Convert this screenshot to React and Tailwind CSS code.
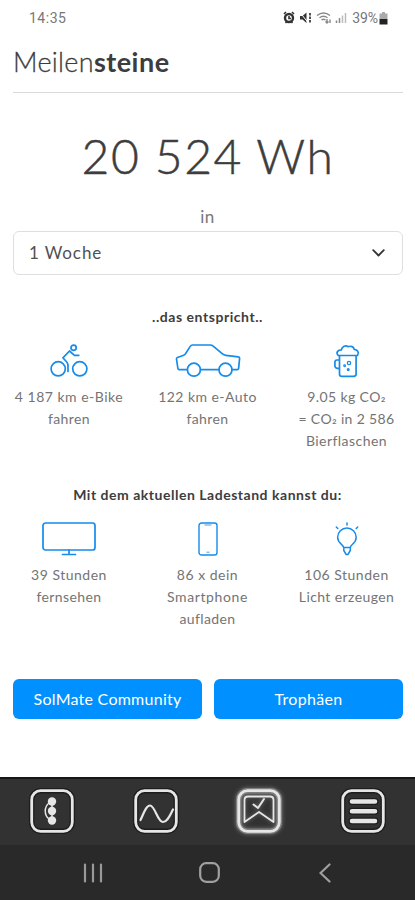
import React from "react";

const line = { fill: "none", stroke: "#168bea", strokeWidth: 1.7, strokeLinecap: "round", strokeLinejoin: "round" };

function BikeIcon() {
  return (
    <svg width="38" height="34" viewBox="0 0 38 34" {...line}>
      <circle cx="8.2" cy="24.8" r="7.1" />
      <circle cx="29.8" cy="24.8" r="7.1" />
      <circle cx="23.6" cy="3.800" r="2.600" />
      <path d="M28.800 11.300h-4.300L19.500 7l-6.600 6.800 3.800 4.200c1.200 1.400 1.300 2.500 1.300 4v5.500" />
    </svg>
  );
}

function CarIcon() {
  return (
    <svg width="66" height="34" viewBox="0 0 66 34" {...line}>
      <path d="M12.300 25.700H4.200c-.8 0-1.200-.4-1.300-1.200L1.500 15c-.1-.8.1-1.200.9-1.500l6.300-2.300c.8-.3 1.300-.8 1.800-1.500L15.200 2.400c.6-1 1.200-1.400 2.300-1.400h17.800c1.200 0 2 .3 2.900 1.100l9.300 7.800c1.100.9 1.900 1.300 3.300 1.500l12.400 1.500c1 .1 1.500.6 1.400 1.600l-1 9.800c-.1 1-.5 1.400-1.500 1.400H57M25.500 25.700H44" />
      <circle cx="18.900" cy="25.700" r="6.500" />
      <circle cx="50.500" cy="25.700" r="6.500" />
    </svg>
  );
}

function BeerIcon() {
  return (
    <svg width="26" height="34" viewBox="0 0 26 34" {...line}>
      <path d="M4.200 11.500c-3-3.500.4-5.700 3.200-5.700C8 2.500 11.600.6 14 2.700c3-1.200 5.700.1 6.200 2.600 3.400.2 5.200 3.500 3.300 6.200z" />
      <path d="M5.500 12v18c0 1.700.8 2.400 2.300 2.400h12c1.500 0 2.300-.8 2.300-2.300V12M5.300 16H2.800C1.400 16 .9 17 .9 18.200v3.600c0 1.700 1.200 2.800 4.400 2.800" />
      <circle cx="15" cy="19" r="1.700" strokeWidth="1.200" />
      <circle cx="10.600" cy="21.800" r=".6" />
      <circle cx="14.200" cy="25.600" r=".7" />
    </svg>
  );
}

function TvIcon() {
  return (
    <svg width="54" height="34" viewBox="0 0 54 34" {...line}>
      <rect x="1" y="1" width="52" height="27" rx="2.500" />
      <path d="M27 28v4.300M20.500 32.500h13" />
    </svg>
  );
}

function PhoneIcon() {
  return (
    <svg width="20" height="34" viewBox="0 0 20 34" {...line} strokeWidth="1.400">
      <rect x="1" y="1" width="18" height="32" rx="2.600" />
      <path d="M7 3h6M9 30.300h2" opacity=".55" />
    </svg>
  );
}

function BulbIcon() {
  return (
    <svg width="24" height="34" viewBox="0 0 24 34" {...line} strokeWidth="1.500">
      <path d="M8.600 25.500c0-3-6-4-6-10.200a9.300 9.300 0 0 1 18.600 0c0 6.200-5.800 7.200-5.800 10.200zM8.800 26v2.500l2.400 4h1.700l2.400-4V26" />
      <path d="M12 1v2M1.300 5l1.500 1.500M22.700 5l-1.500 1.500" />
    </svg>
  );
}

function Sub() {
  return <span className="relative -top-[2px]">₂</span>;
}

function Stat({ icon, lines }) {
  return (
    <div className="flex flex-col items-center">
      {icon}
      <div className="mt-2 flex flex-col items-center text-[14px] leading-[22px] text-[#747474]">
        {lines.map(([text, spacing], i) => (
          <span key={i} className={`whitespace-nowrap ${spacing}`}>{text}</span>
        ))}
      </div>
    </div>
  );
}

function NavButton({ active, children }) {
  return (
    <div className="flex justify-center">
      <svg
        width="44"
        height="44"
        viewBox="0 0 44 44"
        fill="none"
        stroke="#e6e6e6"
        strokeLinecap="round"
        strokeLinejoin="round"
        className={active ? "overflow-visible drop-shadow-[0_0_2px_#ffffff55]" : "overflow-visible"}
      >
        <rect x="1.700" y="1.700" width="40.600" height="40.600" rx="9" stroke={active ? "#808080" : "#1d1d1d"} strokeWidth="5.500" />
        <rect x="1.700" y="1.700" width="40.600" height="40.600" rx="9" strokeWidth="2.800" />
        {children}
      </svg>
    </div>
  );
}

function StatusIcons() {
  return (
    <svg width="65" height="14" viewBox="0 0 65 14" fill="none" stroke="#333">
      <circle cx="6" cy="7" r="4" strokeWidth="2.400" />
      <path d="M1 3l2-2M11 3L9 1M2.500 12l1-1M9.500 12l-1-1M6 5v2.500h2" strokeWidth="1.600" />
      <path d="M17 5h2.500l4-3.500v10.500l-4-3.500H17z" fill="#333" stroke="none" />
      <path d="M17 1.500l8 10" stroke="#fff" strokeWidth="1" />
      <path d="M27 2v10" strokeWidth="1.700" strokeDasharray="2.500 1" />
      <g stroke="#888" strokeWidth="1.400">
        <path d="M34 4.500q6.500-5 13 0M36.500 6.700q4-3 8 0M38.500 9q2-1.500 4 0M44 8v4M42.500 10.500l1.500 1.500 1.500-1.500M47 12V8.500" />
      </g>
      <path d="M53.500 12V9.500M56.500 12V7" stroke="#888" strokeWidth="1.500" />
      <path d="M59.500 12V4.500M62.500 12V2" stroke="#bbb" strokeWidth="1.500" />
    </svg>
  );
}

export default function App() {
  return (
    <div className="flex h-[900px] w-[415px] flex-col overflow-hidden bg-white font-['Lato',sans-serif] text-[#3d3d3d]">
      <header className="flex h-9 shrink-0 items-center justify-between pr-[26px] pl-[29px] font-['Roboto',sans-serif] text-[14px] text-[#777]">
        <span className="tracking-[0.5px]">14:35</span>
        <div className="flex items-center">
          <StatusIcons />
          <span className="ml-[4px] tracking-[-0.1px]">39%</span>
          <svg className="ml-px mr-px" width="9" height="13" viewBox="0 0 9 13">
            <path d="M3 0h3v1.500h2.500V7h-8V1.500H3z" fill="#aaa" />
            <path d="M.5 7h8v5.500h-8z" fill="#222" />
          </svg>
        </div>
      </header>

      <main className="flex h-[741px] shrink-0 flex-col">
        <h1 className="mr-3 ml-[13px] flex h-[57px] items-start border-b border-[#dadada] pt-[9px] text-[27px] leading-[34px]">
          <span className="font-light tracking-[0.3px] [-webkit-text-stroke:0.3px_#3d3d3d]">Meilen</span>
          <span className="font-bold tracking-[0.5px]">steine</span>
        </h1>

        <div className="mt-[33px] pl-px text-center text-[48px] leading-[60px] font-light tracking-[1.5px] whitespace-nowrap [-webkit-text-stroke:0.5px_#3d3d3d]">20 524 Wh</div>
        <div className="mt-[19px] text-center text-[17px] leading-[24px] tracking-[0.4px] text-[#777]">in</div>

        <div className="mt-[2px] mr-3 ml-[13px] flex h-[44px] shrink-0 items-center justify-between rounded-md border border-[#dedede] pr-[17px] pl-[15px] text-[17px] text-[#505050]">
          <span className="tracking-[0.9px]">1 Woche</span>
          <svg width="13" height="8" viewBox="0 0 13 8" fill="none" stroke="#333" strokeWidth="1.800" strokeLinecap="round" strokeLinejoin="round">
            <path d="M1.200 1.200l5.300 5.300 5.300-5.300" />
          </svg>
        </div>

        <h2 className="mt-[32px] text-center text-[14px] leading-[20px] font-bold tracking-[0.55px]">..das entspricht..</h2>
        <div className="mt-[17px] grid h-[110px] shrink-0 grid-cols-[138px_139px_139px]">
          <Stat icon={<BikeIcon />} lines={[["4 187 km e-Bike", "tracking-[0.5px]"], ["fahren", "tracking-[0.4px]"]]} />
          <Stat icon={<CarIcon />} lines={[["122 km e-Auto", "tracking-[0.45px]"], ["fahren", "tracking-[0.4px]"]]} />
          <Stat icon={<BeerIcon />} lines={[[<>9.05 kg CO<Sub /></>, "tracking-[0.4px]"], [<>= CO<Sub /> in 2 586</>, "tracking-[0.35px]"], ["Bierflaschen", "tracking-[0.45px]"]]} />
        </div>

        <h2 className="mt-[31px] text-center text-[14px] leading-[20px] font-bold tracking-[0.52px]">Mit dem aktuellen Ladestand kannst du:</h2>
        <div className="mt-[17px] grid h-[110px] shrink-0 grid-cols-[138px_139px_139px]">
          <Stat icon={<TvIcon />} lines={[["39 Stunden", "tracking-[0.5px]"], ["fernsehen", "tracking-[0.4px]"]]} />
          <Stat icon={<PhoneIcon />} lines={[["86 x dein", "tracking-[0.5px]"], ["Smartphone", "tracking-[0.6px]"], ["aufladen", "tracking-[0.4px]"]]} />
          <Stat icon={<BulbIcon />} lines={[["106 Stunden", "tracking-[0.5px]"], ["Licht erzeugen", "tracking-[0.4px]"]]} />
        </div>

        <div className="mt-[47px] mr-3 ml-[13px] grid h-10 shrink-0 grid-cols-2 gap-3 text-[16px] text-white">
          <button className="rounded-md bg-[#0090ff] tracking-[0.25px]">SolMate Community</button>
          <button className="rounded-md bg-[#0090ff] tracking-[0.3px]">Trophäen</button>
        </div>
      </main>

      <nav className="grid h-[68px] shrink-0 grid-cols-4 items-start border-t-2 border-[#161616] bg-[#323232] pt-[10px]">
        <NavButton>
          <g fill="#e6e6e6" stroke="none">
            <circle cx="22" cy="12.500" r="4.200" />
            <circle cx="22" cy="22" r="4.200" />
            <circle cx="22" cy="31.500" r="4.200" />
          </g>
          <path d="M22 12v20M19 14c-5 4-5 12 0 16" strokeWidth="1.500" />
        </NavButton>
        <NavButton>
          <path d="M6.500 31c3-6 5.500-14.500 9.500-14.500 5 0 7.500 16.500 13 16.500 4.500 0 7-7 10-12.500" strokeWidth="2.200" />
        </NavButton>
        <NavButton active>
          <path d="M7.500 33V11c0-2.200 1.300-3.500 3.500-3.500h22c2.200 0 3.500 1.300 3.500 3.500v22L22 23z" strokeWidth="1.800" />
          <path d="M16.500 15.500l4.500 3.500 6-9" strokeWidth="2" />
        </NavButton>
        <NavButton>
          <path d="M11 12.500h23M11 22.200h23M11 32h23" stroke="#1d1d1d" strokeWidth="7" />
          <path d="M11 12.500h23M11 22.200h23M11 32h23" strokeWidth="4.600" />
        </NavButton>
      </nav>

      <footer className="flex h-[55px] shrink-0 items-center justify-between bg-[#292929] pr-[84px] pl-[83px]">
        <svg width="20" height="20" viewBox="0 0 20 20" stroke="#999" strokeWidth="2.200" strokeLinecap="round">
          <path d="M2 1.500v17M10 1.500v17M18 1.500v17" />
        </svg>
        <svg className="mr-[4px]" width="21" height="21" viewBox="0 0 21 21" fill="none" stroke="#a0a0a0" strokeWidth="2.200">
          <rect x="1.200" y="1.200" width="18.600" height="18.600" rx="6" />
        </svg>
        <svg width="12" height="20" viewBox="0 0 12 20" fill="none" stroke="#a0a0a0" strokeWidth="2.200" strokeLinecap="round">
          <path d="M10.500 1.500L1.500 10l9 8.500" />
        </svg>
      </footer>
    </div>
  );
}
